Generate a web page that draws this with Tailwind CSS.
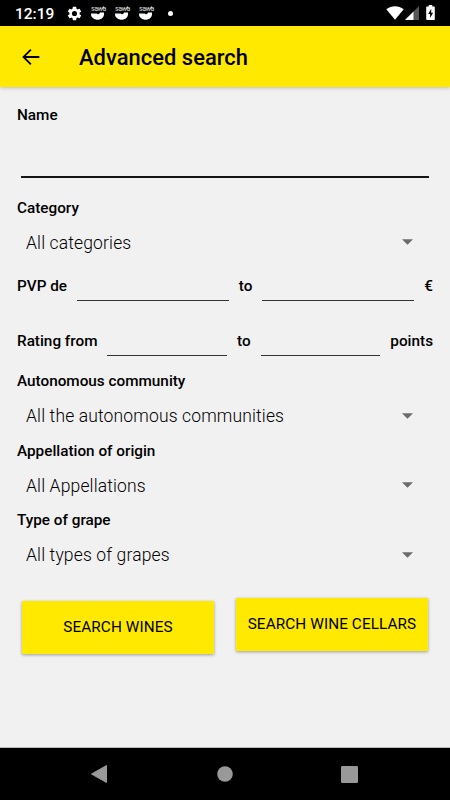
<!DOCTYPE html>
<html lang="en">
<head>
    <meta charset="UTF-8">
    <meta name="viewport" content="width=device-width, initial-scale=1.0">
    <title>Advanced search</title>
    <script src="https://cdn.jsdelivr.net/npm/@tailwindcss/browser@4"></script>
</head>
<body class="bg-[#f1f1f1] font-['Roboto',sans-serif] text-black">
<div class="w-[450px] h-[800px] flex flex-col overflow-hidden">

    <!-- Status bar -->
    <div class="h-[26px] shrink-0 bg-black text-white flex items-center pl-[15px] pr-[15px]">
        <span class="w-[51px] text-[15.5px] font-medium leading-[26px] pt-[2px]">12:19</span>
        <svg class="w-[17px] h-[17px]" viewBox="0 0 24 24" fill="#fff"><path d="M19.14 12.94c.04-.3.06-.61.06-.94s-.02-.64-.07-.94l2.03-1.58a.49.49 0 0 0 .12-.61l-1.92-3.32a.49.49 0 0 0-.59-.22l-2.39.96a7 7 0 0 0-1.62-.94l-.36-2.54A.48.48 0 0 0 13.92 2.400h-3.84a.47.47 0 0 0-.47.41l-.36 2.540a7.300 7.300 0 0 0-1.620.94l-2.390-.96a.47.47 0 0 0-.59.22L2.740 8.870a.47.47 0 0 0 .12.61l2.030 1.580a6 6 0 0 0 0 1.880l-2.030 1.580a.49.49 0 0 0-.12.61l1.920 3.320c.12.22.37.29.59.22l2.390-.96c.5.38 1.030.7 1.620.94l.36 2.540c.05.24.24.41.48.41h3.840c.24 0 .44-.17.47-.41l.36-2.540a7 7 0 0 0 1.620-.94l2.390.96c.22.08.47 0 .59-.22l1.920-3.320a.47.47 0 0 0-.12-.61zM12 15.600a3.600 3.600 0 1 1 0-7.200 3.600 3.600 0 0 1 0 7.200z"/></svg>
        <div class="flex gap-[8px] ml-[7px]">
            <div class="w-4 h-[17px] relative">
                <svg class="w-4 h-[17px]" viewBox="0 0 16 17" fill="#fff"><path d="M1 8.500h5.500q1.700 1.500 3 0L10 7.500h4V10a6.500 5.500 0 0 1-13-1.500zM12 4l1.500-2.700.8.300-1.300 2.700z"/></svg>
                <span class="absolute left-[1px] top-[1px] text-[7px] leading-[7px] tracking-[-0.4px] text-[#ddd]">sawa</span>
            </div>
            <div class="w-4 h-[17px] relative">
                <svg class="w-4 h-[17px]" viewBox="0 0 16 17" fill="#fff"><path d="M1 8.500h5.500q1.700 1.500 3 0L10 7.500h4V10a6.500 5.500 0 0 1-13-1.500zM12 4l1.500-2.700.8.300-1.300 2.700z"/></svg>
                <span class="absolute left-[1px] top-[1px] text-[7px] leading-[7px] tracking-[-0.4px] text-[#ddd]">sawa</span>
            </div>
            <div class="w-4 h-[17px] relative">
                <svg class="w-4 h-[17px]" viewBox="0 0 16 17" fill="#fff"><path d="M1 8.500h5.500q1.700 1.500 3 0L10 7.500h4V10a6.500 5.500 0 0 1-13-1.500zM12 4l1.500-2.700.8.300-1.300 2.700z"/></svg>
                <span class="absolute left-[1px] top-[1px] text-[7px] leading-[7px] tracking-[-0.4px] text-[#ddd]">sawa</span>
            </div>
        </div>
        <span class="w-[5px] h-[5px] rounded-full bg-white ml-[14px]"></span>
        <div class="ml-auto flex items-center">
            <svg class="w-[18px] h-[14px]" viewBox="0 0 18 14" fill="#fff"><path d="M.3 3.200C5.500-.7 12.500-.7 17.700 3.200L9 13.700z"/></svg>
            <svg class="w-[14px] h-[14px] ml-[1px]" viewBox="0 0 14 14"><path d="M14 0v14H0z" fill="#555"/><path d="M8.500 5.500V14H0z" fill="#fff"/></svg>
            <svg class="w-[9px] h-[16px] ml-[7px]" viewBox="0 0 9 16"><path d="M2.700 0h3.600v1.500h1.700a.8.800 0 0 1 .8.800v12a.8.800 0 0 1-.8.800H1a.8.800 0 0 1-.8-.8v-12a.8.800 0 0 1 .8-.8h1.700z" fill="#fff"/><path d="M5.200 3.800L2.200 9h1.900v4l3-5.300H5.200z" fill="#000"/></svg>
        </div>
    </div>

    <!-- App bar -->
    <header class="h-[61px] shrink-0 bg-[#ffe900] flex items-center pl-[18px] pt-[2px] shadow-[0_1px_4px_rgba(0,0,0,0.22)]">
        <svg class="w-[26px] h-[26px] -mt-[2px]" viewBox="0 0 24 24" fill="#000"><path d="M19.700 11.100H7.200l5.300-5.300L11.300 4.600 3.900 12l7.400 7.400 1.200-1.200-5.300-5.300h12.500z"/></svg>
        <h1 class="ml-[35px] text-[21.9px] font-medium leading-[30px] tracking-[0.04px]">Advanced search</h1>
    </header>

    <!-- Search form -->
    <form class="grow flex flex-col px-[17px] pt-[18px] text-[15.3px] leading-5 font-medium border-b border-[#bbb]">
        <label for="name">Name</label>
        <input id="name" type="text" class="h-[53px] mx-1 border-b-2 border-[#151515] outline-none">

        <label class="mt-[20px]">Category</label>
        <div class="h-[49px] flex items-center justify-between pl-[9px] pr-[20px] text-[17.5px] font-light tracking-[0.14px]">
            <span>All categories</span>
            <svg class="w-[11px] h-[6px] -mt-[2px]" viewBox="0 0 11 6"><path d="M0 .2h11L5.500 5.700z" fill="#6c6c6c"/></svg>
        </div>

        <div class="h-[34px] flex items-start mt-[9px]">
            <label>PVP de</label>
            <input type="text" class="w-0 grow h-[25px] ml-[10px] mr-[10px] border-b border-[#333] outline-none">
            <label>to</label>
            <input type="text" class="w-0 grow h-[25px] ml-[10px] mr-[10px] border-b border-[#333] outline-none">
            <label>€</label>
        </div>
        <div class="h-[19px] flex items-start mt-[21px]">
            <label>Rating from</label>
            <input type="text" class="w-0 grow h-[25px] ml-[10px] mr-[10px] border-b border-[#333] outline-none">
            <label>to</label>
            <input type="text" class="w-0 grow h-[25px] ml-[10px] mr-[10px] border-b border-[#333] outline-none">
            <label>points</label>
        </div>

        <label class="mt-[21px]">Autonomous community</label>
        <div class="h-[49.5px] flex items-center justify-between pl-[9px] pr-[20px] text-[17.5px] font-light tracking-[0.14px]">
            <span>All the autonomous communities</span>
            <svg class="w-[11px] h-[6px]" viewBox="0 0 11 6"><path d="M0 .2h11L5.500 5.700z" fill="#6c6c6c"/></svg>
        </div>
        <label>Appellation of origin</label>
        <div class="h-[49.5px] flex items-center justify-between pl-[9px] pr-[20px] text-[17.5px] font-light tracking-[0.14px]">
            <span class="pt-px">All Appellations</span>
            <svg class="w-[11px] h-[6px]" viewBox="0 0 11 6"><path d="M0 .2h11L5.500 5.700z" fill="#6c6c6c"/></svg>
        </div>
        <label>Type of grape</label>
        <div class="h-[49.5px] flex items-center justify-between pl-[9px] pr-[20px] text-[17.5px] font-light tracking-[0.14px]">
            <span>All types of grapes</span>
            <svg class="w-[11px] h-[6px]" viewBox="0 0 11 6"><path d="M0 .2h11L5.500 5.700z" fill="#6c6c6c"/></svg>
        </div>

        <div class="flex justify-between mt-[18px] pl-[5px] pr-[5px]">
            <button type="button" class="w-[192px] h-[53px] mt-[3px] bg-[#ffe900] font-normal tracking-[0.1px] shadow-[0_1px_3px_rgba(0,0,0,0.35)]">SEARCH WINES</button>
            <button type="button" class="w-[192px] h-[53px] bg-[#ffe900] font-normal tracking-[0.1px] shadow-[0_1px_3px_rgba(0,0,0,0.35)]">SEARCH WINE CELLARS</button>
        </div>
    </form>

    <!-- Navigation bar -->
    <nav class="h-[52px] shrink-0 bg-black flex items-center justify-between pl-[91px] pr-[92px]">
        <svg class="w-[16px] h-[18px]" viewBox="0 0 16 18"><path d="M15.500.5v17L.5 9z" fill="#999" stroke="#999" stroke-linejoin="round"/></svg>
        <svg class="w-[16px] h-[16px] ml-[1px]" viewBox="0 0 16 16"><circle cx="8" cy="8" r="7.800" fill="#999"/></svg>
        <svg class="w-[17px] h-[17px]" viewBox="0 0 17 17"><rect width="17" height="17" rx="1.300" fill="#999"/></svg>
    </nav>

</div>
</body>
</html>
